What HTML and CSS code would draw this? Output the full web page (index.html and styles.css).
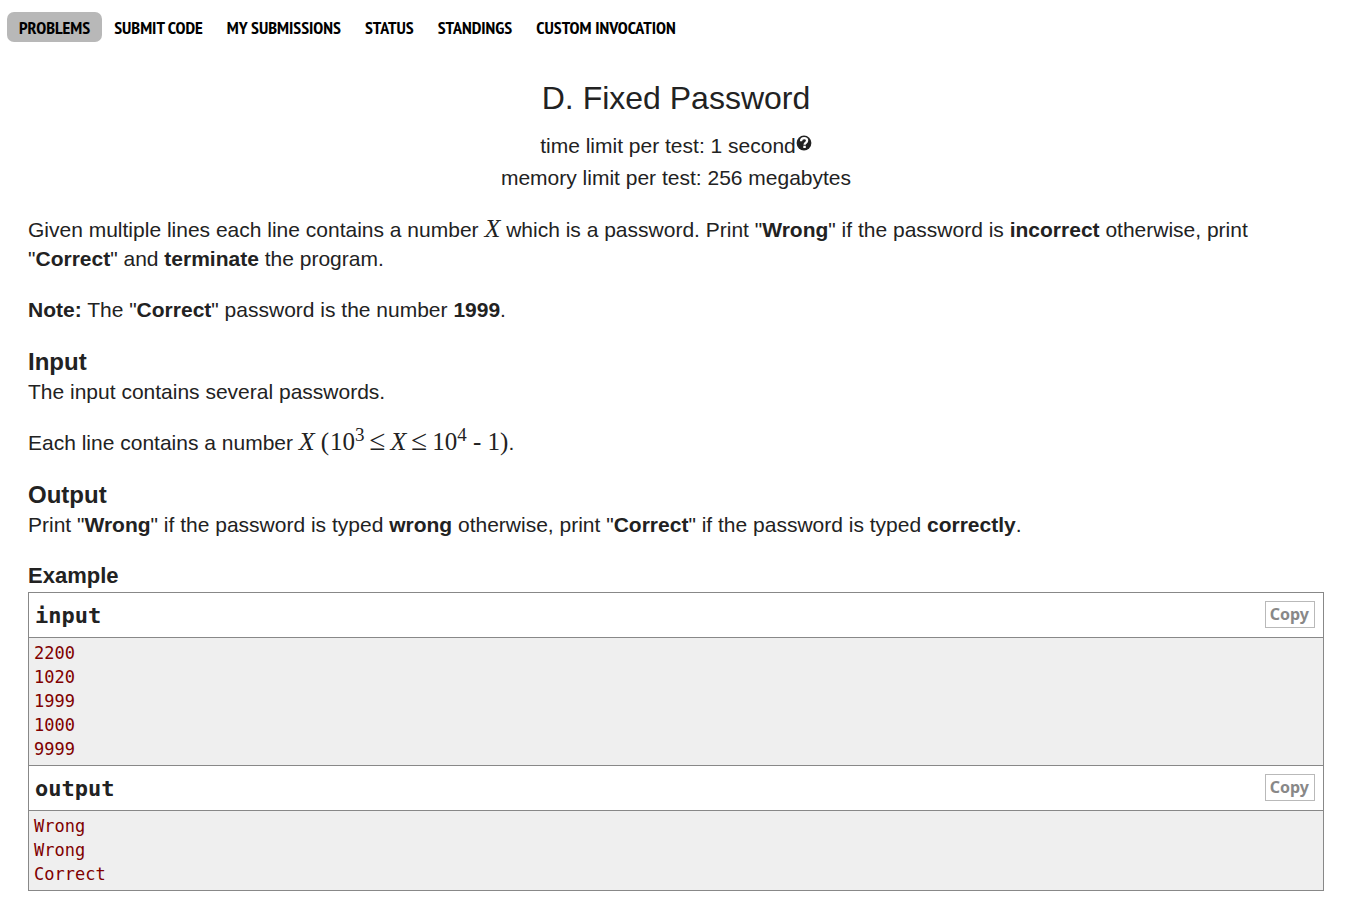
FILE: index.html
```html
<!DOCTYPE html>
<html lang="en">
<head>
<meta charset="utf-8">
<title>D. Fixed Password</title>
<link rel="stylesheet" href="styles.css">
</head>
<body>
<nav class="menu">
  <a class="menu-link current" href="#problems">PROBLEMS</a>
  <a class="menu-link" href="#submit">SUBMIT CODE</a>
  <a class="menu-link" href="#my">MY SUBMISSIONS</a>
  <a class="menu-link" href="#status">STATUS</a>
  <a class="menu-link" href="#standings">STANDINGS</a>
  <a class="menu-link" href="#invocation">CUSTOM INVOCATION</a>
</nav>
<main class="problem">
  <header class="header">
    <h1 class="title">D. Fixed Password</h1>
    <div class="limit">time limit per test: 1 second<svg class="help" viewBox="0 0 16 16" role="img" aria-label="Help"><circle cx="8" cy="8" r="7.4" fill="#222"/><path d="M5 6.2C5.1 4.3 6.3 3.2 8.1 3.2c1.8 0 3 1 3 2.5 0 2-2.5 2.1-2.5 4" fill="none" stroke="#fff" stroke-width="2.3"/><path d="M7.3 10.7h2.5v2.3H7.3z" fill="#fff"/></svg></div>
    <div class="limit">memory limit per test: 256 megabytes</div>
  </header>
  <p class="text">Given multiple lines each line contains a number <span class="math"><i>X</i></span> which is a password. Print "<b>Wrong</b>" if the password is <b>incorrect</b> otherwise, print "<b>Correct</b>" and <b>terminate</b> the program.</p>
  <p class="text"><b>Note:</b> The "<b>Correct</b>" password is the number <b>1999</b>.</p>
  <section>
    <h2 class="section-title">Input</h2>
    <p class="text">The input contains several passwords.</p>
    <p class="text">Each line contains a number <span class="math"><i>X</i><span class="open">(</span>10<sup>3</sup><span class="rel">≤</span><i>X</i><span class="rel">≤</span>10<sup>4</sup> - 1)</span>.</p>
  </section>
  <section>
    <h2 class="section-title">Output</h2>
    <p class="text">Print "<b>Wrong</b>" if the password is typed <b>wrong</b> otherwise, print "<b>Correct</b>" if the password is typed <b>correctly</b>.</p>
  </section>
  <section>
    <h2 class="example-title">Example</h2>
    <div class="sample">
      <div class="sample-head"><h3 class="sample-name">input</h3><button class="copy" type="button">Copy</button></div>
      <pre class="data">2200
1020
1999
1000
9999</pre>
      <div class="sample-head"><h3 class="sample-name">output</h3><button class="copy" type="button">Copy</button></div>
      <pre class="data">Wrong
Wrong
Correct</pre>
    </div>
  </section>
</main>
</body>
</html>
```
FILE: styles.css
```css
* { box-sizing: border-box; }
body {
  margin: 0;
  background: #fff;
  color: #222;
  font: 21px/29px "Liberation Sans", Arial, sans-serif;
}
h1, h2, h3, p, pre { margin: 0; }
.menu { display: flex; flex-wrap: wrap; padding: 12px 7px 0; }
.menu-link {
  padding: 0 12px;
  border-radius: 7px;
  color: #000;
  font: bold 18px/32px "PT Sans Narrow", "Liberation Sans Narrow", "Open Sans Condensed", "Liberation Sans", sans-serif;
  height: 30px;
  text-decoration: none;
}
.current { background: #b8b8b8; }
.problem { padding: 36px 24px 26px 28px; }
.header { text-align: center; margin-bottom: 21px; }
.title { margin-bottom: 12px; font-size: 32px; line-height: 40px; font-weight: normal; }
.limit { line-height: 32px; }
.help { width: 16px; height: 16px; vertical-align: 2px; }
.text { margin-bottom: 22px; }
.math { font: 25px/20px "Liberation Serif", "Times New Roman", serif; }
.math i { font-size: 26px; }
.math sup { font-size: 19px; line-height: 0; vertical-align: 9px; }
.open { margin: 0 1px 0 6px; }
.rel { margin: 0 5px; font-size: 29px; line-height: 20px; }
.section-title { font-size: 24px; line-height: 31px; }
.example-title { font-size: 22px; line-height: 30px; padding-bottom: 1px; }
.sample { border: 1px solid #888; }
.sample-head {
  display: flex;
  align-items: flex-start;
  justify-content: space-between;
  padding: 8px 8px 7px 6px;
  border-bottom: 1px solid #888;
}
.sample-name { font: bold 22px/29px "DejaVu Sans Mono", monospace; }
.copy {
  padding: 0 5px 0 4px;
  border: 1px solid #b9b9b9;
  background: #fff;
  color: #888;
  font: bold 16px/25px "Noto Sans", sans-serif;
}
.data {
  padding: 3px 5px 4px;
  background: #efefef;
  color: #800000;
  font: 17px/24px "DejaVu Sans Mono", monospace;
}
.data + .sample-head { border-top: 1px solid #888; }
```
